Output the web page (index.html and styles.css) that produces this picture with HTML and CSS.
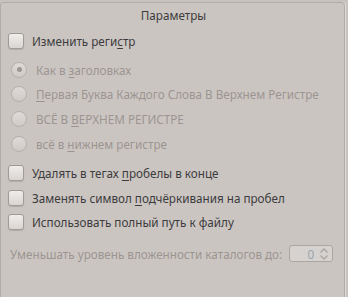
FILE: index.html
```html
<!DOCTYPE html>
<html lang="ru">
<head>
<meta charset="utf-8">
<link rel="stylesheet" href="styles.css">
</head>
<body>
<div class="frame">
  <div class="title">Параметры</div>
  <div class="row check-row first">
    <span class="checkbox"></span>
    <span class="label">Изменить реги<u>с</u>тр</span>
  </div>
  <div class="radios">
    <div class="row radio-row">
      <span class="radio checked"></span>
      <span class="label dis">Как в <u>з</u>аголовках</span>
    </div>
    <div class="row radio-row">
      <span class="radio"></span>
      <span class="label dis"><u>П</u>ервая Буква Каждого Слова В Верхнем Регистре</span>
    </div>
    <div class="row radio-row">
      <span class="radio"></span>
      <span class="label dis">ВСЁ В <u>В</u>ЕРХНЕМ РЕГИСТРЕ</span>
    </div>
    <div class="row radio-row">
      <span class="radio"></span>
      <span class="label dis">всё в <u>н</u>ижнем регистре</span>
    </div>
  </div>
  <div class="checks">
    <div class="row check-row">
      <span class="checkbox"></span>
      <span class="label">Удалять в тегах <u>п</u>робелы в конце</span>
    </div>
    <div class="row check-row">
      <span class="checkbox"></span>
      <span class="label">Заменять символ <u>п</u>одчёркивания на пробел</span>
    </div>
    <div class="row check-row">
      <span class="checkbox"></span>
      <span class="label">Использовать полный путь к файлу</span>
    </div>
  </div>
  <div class="spin-row">
    <span class="label dis">Уменьшать уровень вложенности каталогов до:</span>
    <span class="spin">
      <span class="spin-val">0</span>
      <svg class="spin-arrows" width="10" height="14" viewBox="0 0 10 14">
        <path d="M1.5 5.5 L5 2 L8.5 5.5" fill="none" stroke="#a9a5a2" stroke-width="1.3"/>
        <path d="M1.5 8.5 L5 12 L8.5 8.5" fill="none" stroke="#a9a5a2" stroke-width="1.3"/>
      </svg>
    </span>
  </div>
</div>
</body>
</html>
```

FILE: styles.css
```css
html, body {
  margin: 0;
  padding: 0;
  background: #c8c2bf;
  width: 348px;
  height: 297px;
  overflow: hidden;
}
body {
  font-family: "Noto Sans", "DejaVu Sans", sans-serif;
  font-size: 11.7px;
  color: #3c3c3c;
}
.frame {
  margin: 2px 3px 0 0;
  height: 295px;
  border: 1px solid #b2aca8;
  border-bottom: none;
  border-radius: 4px 4px 0 0;
  background: #cbc5c2;
  box-shadow: 1px 0 0 #e0dcda;
  box-sizing: border-box;
}
.title {
  text-align: center;
  height: 23px;
  line-height: 24px;
  padding-left: 2px;
}
.row {
  display: flex;
  align-items: center;
  height: 24.6px;
}
.check-row { padding-left: 7px; }
.first { margin-top: 3px; }
.radios { margin-top: 4px; }
.checks { margin-top: 5px; }
.label { white-space: nowrap; }
.label u { text-decoration-thickness: 1px; text-underline-offset: 2px; }
.dis { color: #9b9591; }
.checkbox {
  width: 14px;
  height: 14px;
  border: 1px solid #a19b97;
  border-radius: 3px;
  background: linear-gradient(#efedeb, #d9d5d2);
  box-shadow: 0 1px 1px rgba(0,0,0,0.12);
  margin-right: 8px;
  flex: none;
}
.radio-row { padding-left: 10px; }
.radio {
  width: 14px;
  height: 14px;
  border: 1px solid #b6b0ac;
  border-radius: 50%;
  background: linear-gradient(#dedad8, #cfcac7);
  margin-right: 9px;
  flex: none;
  display: flex;
  align-items: center;
  justify-content: center;
}
.radio.checked::after {
  content: "";
  width: 5px;
  height: 5px;
  border-radius: 50%;
  background: #9d9793;
}
.spin-row {
  display: flex;
  align-items: center;
  padding-left: 9px;
  margin-top: 7px;
  height: 24px;
}
.spin {
  margin-left: 7px;
  width: 44px;
  height: 17px;
  box-sizing: border-box;
  border: 1px solid #aba6a2;
  border-radius: 3px;
  background: #d6d2cf;
  display: flex;
  align-items: center;
  justify-content: flex-end;
  padding-right: 3px;
}
.spin-val {
  color: #9aa4ad;
  margin-right: 5px;
}
.spin-arrows { display: block; }
```
